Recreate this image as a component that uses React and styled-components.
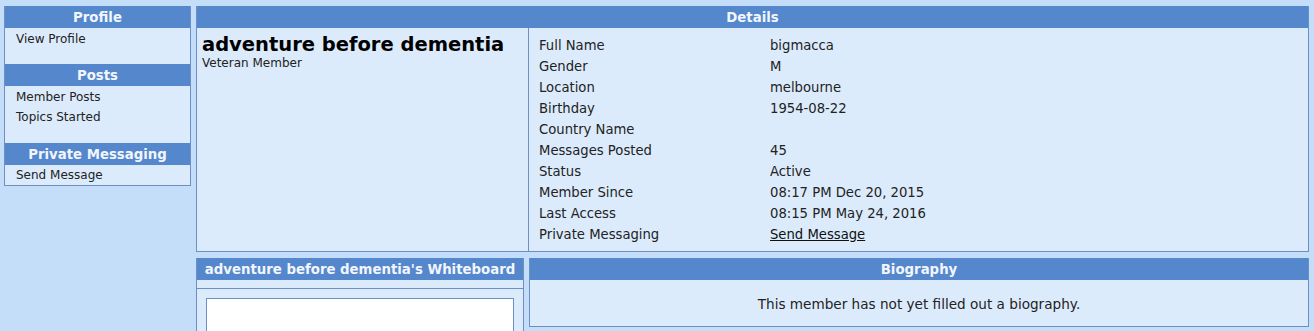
import styled, { createGlobalStyle } from "styled-components";

const GlobalStyle = createGlobalStyle`
  body {
    margin: 0;
    background: #c4ddf8;
    font-family: "DejaVu Sans", Verdana, sans-serif;
    color: #222;
  }
`;

const details = [
  ["Full Name", "bigmacca"],
  ["Gender", "M"],
  ["Location", "melbourne"],
  ["Birthday", "1954-08-22"],
  ["Country Name", ""],
  ["Messages Posted", "45"],
  ["Status", "Active"],
  ["Member Since", "08:17 PM Dec 20, 2015"],
  ["Last Access", "08:15 PM May 24, 2016"],
];

const menu = [
  { title: "Profile", items: ["View Profile"], top: 1, pad: 15 },
  { title: "Posts", items: ["Member Posts", "Topics Started"], top: 1, pad: 16 },
  { title: "Private Messaging", items: ["Send Message"], top: 0, pad: 0 },
];

const App = () => {
  return (
    <Page>
      <GlobalStyle />
      <Sidebar>
        {menu.map((section) => (
          <div key={section.title}>
            <Header>{section.title}</Header>
            <MenuList $top={section.top} $pad={section.pad}>
              {section.items.map((item) => (
                <MenuItem key={item}>{item}</MenuItem>
              ))}
            </MenuList>
          </div>
        ))}
      </Sidebar>
      <Main>
        <Panel>
          <Header>Details</Header>
          <DetailsBody>
            <NameCell>
              <Name>adventure before dementia</Name>
              <Rank>Veteran Member</Rank>
            </NameCell>
            <InfoTable>
              {details.map(([label, value]) => (
                <InfoRow key={label}>
                  <span>{label}</span>
                  <span>{value}</span>
                </InfoRow>
              ))}
              <InfoRow>
                <span>Private Messaging</span>
                <Link href="#">Send Message</Link>
              </InfoRow>
            </InfoTable>
          </DetailsBody>
        </Panel>
        <BottomRow>
          <Panel>
            <Header>adventure before dementia's Whiteboard</Header>
            <Band />
            <BoardBody>
              <Board />
            </BoardBody>
          </Panel>
          <Panel>
            <Header>Biography</Header>
            <BioText>This member has not yet filled out a biography.</BioText>
          </Panel>
        </BottomRow>
      </Main>
    </Page>
  );
};

const Page = styled.div`
  display: flex;
  align-items: flex-start;
  gap: 5px;
  padding: 6px 5px 0 4px;
  height: 331px;
  box-sizing: border-box;
  overflow: hidden;
`;

const Sidebar = styled.div`
  width: 187px;
  flex-shrink: 0;
  background: #dcebfc;
  border: 1px solid #6d8fc2;
  border-top: none;
  box-sizing: border-box;
`;

const Header = styled.div`
  height: 22px;
  line-height: 24px;
  overflow: hidden;
  background: #5587cd;
  color: #f2f6fc;
  font-weight: bold;
  font-size: 13.3px;
  text-align: center;
  white-space: nowrap;
`;

const MenuList = styled.div`
  padding: ${(p) => p.$top}px 0 ${(p) => p.$pad}px 11px;
`;

const MenuItem = styled.div`
  font-size: 12px;
  line-height: 20px;
`;

const Main = styled.div`
  flex: 1;
  display: flex;
  flex-direction: column;
  gap: 6px;
`;

const Panel = styled.div`
  background: #dcebfc;
  border: 1px solid #6d8fc2;
  border-top: none;
  box-sizing: border-box;
`;

const DetailsBody = styled.div`
  display: grid;
  grid-template-columns: 332px 1fr;
`;

const NameCell = styled.div`
  padding: 6px 5px;
  border-right: 1px solid #6d8fc2;
`;

const Name = styled.div`
  font-size: 19.5px;
  font-weight: bold;
  color: #000;
  line-height: 22px;
`;

const Rank = styled.div`
  font-size: 12px;
  line-height: 14px;
`;

const InfoTable = styled.div`
  padding: 7px 0 6px 10px;
  font-size: 13.2px;
`;

const InfoRow = styled.div`
  display: grid;
  grid-template-columns: 231px 1fr;
  line-height: 21px;
`;

const Link = styled.a`
  color: #111;
  text-decoration: underline;
`;

const BottomRow = styled.div`
  display: grid;
  grid-template-columns: 328px 1fr;
  align-items: start;
  gap: 5px;
`;

const Band = styled.div`
  height: 8px;
  border-bottom: 1px solid #6d8fc2;
`;

const BoardBody = styled.div`
  padding: 9px 9px 0 9px;
`;

const Board = styled.div`
  height: 60px;
  background: #fff;
  border: 1px solid #6d8fc2;
`;

const BioText = styled.div`
  font-size: 13.6px;
  text-align: center;
  padding: 16px 0 14px;
  line-height: 16px;
`;

export default App;
